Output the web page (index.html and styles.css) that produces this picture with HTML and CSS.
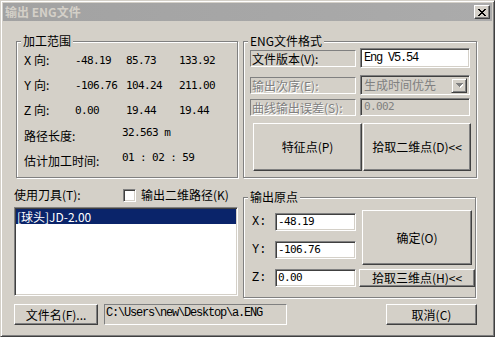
FILE: index.html
```html
<!DOCTYPE html>
<html lang="zh-CN">
<head>
    <meta charset="UTF-8">
    <title>输出 ENG文件</title>
    <link rel="stylesheet" href="styles.css">
</head>
<body>
    <div class="window">
        <div class="titlebar">
            <span class="title">输出 ENG文件</span>
            <span class="close-btn">
                <svg width="8" height="7" viewBox="0 0 8 7" shape-rendering="crispEdges">
                    <rect x="0" y="0" width="2" height="1"/><rect x="6" y="0" width="2" height="1"/>
                    <rect x="1" y="1" width="2" height="1"/><rect x="5" y="1" width="2" height="1"/>
                    <rect x="2" y="2" width="4" height="1"/>
                    <rect x="3" y="3" width="2" height="1"/>
                    <rect x="2" y="4" width="4" height="1"/>
                    <rect x="1" y="5" width="2" height="1"/><rect x="5" y="5" width="2" height="1"/>
                    <rect x="0" y="6" width="2" height="1"/><rect x="6" y="6" width="2" height="1"/>
                </svg>
            </span>
        </div>

        <div class="dialog">
            <div class="main">
                <div class="col-left">
                    <div class="group range">
                        <span class="legend">加工范围</span>
                        <div class="coord-row"><span class="axis"><span class="mono">X</span> 向:</span><span class="num">-48.19</span><span class="num">85.73</span><span class="num">133.92</span></div>
                        <div class="coord-row"><span class="axis"><span class="mono">Y</span> 向:</span><span class="num">-106.76</span><span class="num">104.24</span><span class="num">211.00</span></div>
                        <div class="coord-row"><span class="axis"><span class="mono">Z</span> 向:</span><span class="num">0.00</span><span class="num">19.44</span><span class="num">19.44</span></div>
                        <div class="info-row"><span>路径长度:</span><span class="num raised">32.563 m</span></div>
                        <div class="info-row"><span>估计加工时间:</span><span class="num raised">01 : 02 : 59</span></div>
                    </div>

                    <div class="tool-row">
                        <span class="tool-label">使用刀具(T):</span>
                        <span class="checkbox"></span>
                        <span>输出二维路径(K)</span>
                    </div>

                    <div class="listbox">
                        <div class="list-item selected">[球头]JD-2.00</div>
                    </div>
                </div>

                <div class="col-right">
                    <div class="group format">
                        <span class="legend">ENG文件格式</span>
                        <div class="fmt-row first">
                            <span class="static-box">文件版本(V):</span>
                            <span class="edit mono-text">Eng V5.54</span>
                        </div>
                        <div class="fmt-row second">
                            <span class="static-box disabled">输出次序(E):</span>
                            <span class="edit combo inactive">
                                <span class="combo-text">生成时间优先</span>
                                <span class="drop-btn">
                                    <svg width="7" height="5" viewBox="0 0 7 5" shape-rendering="crispEdges">
                                        <path d="M1 1h7v1h-1v1h-1v1h-1v1h-1v-1h-1v-1h-1v-1h-1z" fill="#fff"/>
                                        <path d="M0 0h7v1h-1v1h-1v1h-1v1h-1v-1h-1v-1h-1v-1h-1z" fill="#808080"/>
                                    </svg>
                                </span>
                            </span>
                        </div>
                        <div class="fmt-row third">
                            <span class="static-box disabled">曲线输出误差(S):</span>
                            <span class="edit inactive"><span class="num gray">0.002</span></span>
                        </div>
                        <div class="btn-row">
                            <button class="btn big first">特征点(P)</button>
                            <button class="btn big">拾取二维点(D)&lt;&lt;</button>
                        </div>
                    </div>

                    <div class="group origin">
                        <span class="legend">输出原点</span>
                        <div class="origin-fields">
                            <div class="origin-row"><span class="axis-label">X:</span><span class="edit small"><span class="num">-48.19</span></span></div>
                            <div class="origin-row"><span class="axis-label">Y:</span><span class="edit small"><span class="num">-106.76</span></span></div>
                            <div class="origin-row"><span class="axis-label">Z:</span><span class="edit small"><span class="num">0.00</span></span></div>
                        </div>
                        <div class="origin-buttons">
                            <button class="btn ok">确定(O)</button>
                            <button class="btn pick3d">拾取三维点(H)&lt;&lt;</button>
                        </div>
                    </div>
                </div>
            </div>

            <div class="footer">
                <button class="btn file-btn">文件名(F)...</button>
                <span class="path-box mono-text">C:\Users\new\Desktop\a.ENG</span>
                <button class="btn cancel">取消(C)</button>
            </div>
        </div>
    </div>
</body>
</html>
```

FILE: styles.css
```css
body {
    margin: 0;
    background-color: #d4d0c8;
    font-family: "Noto Sans CJK SC", "Noto Sans", sans-serif;
    font-size: 12px;
    line-height: 14px;
    color: #000;
}
.window {
    width: 495px;
    height: 337px;
    box-sizing: border-box;
    padding: 2px;
    background-color: #d4d0c8;
    border: 1px solid;
    border-color: #d4d0c8 #404040 #404040 #d4d0c8;
    box-shadow: inset 1px 1px 0 #fff, inset -1px -1px 0 #808080;
}
.titlebar {
    height: 18px;
    display: flex;
    align-items: center;
    justify-content: space-between;
    padding: 0 2px 0 2px;
    background: linear-gradient(to right, #a2a2a2, #ababab);
}
.title {
    color: #d4d0c8;
    font-weight: bold;
    font-size: 12px;
    letter-spacing: 0;
}
.close-btn {
    width: 16px;
    height: 14px;
    box-sizing: border-box;
    display: flex;
    align-items: center;
    justify-content: center;
    background-color: #d4d0c8;
    border: 1px solid;
    border-color: #fff #404040 #404040 #fff;
    box-shadow: inset -1px -1px 0 #808080;
}
.close-btn svg {
    fill: #000;
}
.dialog {
    padding: 14px 15px 0 11px;
}
.main {
    display: grid;
    grid-template-columns: 224px 234px;
    column-gap: 5px;
    align-items: start;
}
.group {
    position: relative;
    box-sizing: border-box;
    margin-top: 6px;
    border: 1px solid #808080;
    box-shadow: inset 1px 1px 0 #fff, 1px 1px 0 #fff;
}
.legend {
    position: absolute;
    top: -8px;
    left: 4px;
    padding: 0 2px;
    background-color: #d4d0c8;
    line-height: 14px;
}
.mono, .num, .mono-text {
    font-family: "Liberation Mono", "DejaVu Sans Mono", monospace;
}
.num {
    font-family: "DejaVu Sans Mono", monospace;
    font-size: 11px;
    letter-spacing: -0.6px;
}
.mono-text {
    font-size: 12px;
    letter-spacing: -1.2px;
}
.mono {
    font-size: 12px;
}

/* 加工范围 */
.range {
    margin-left: 2px;
    width: 222px;
    height: 137px;
    padding: 6px 0 0 7px;
}
.coord-row {
    display: grid;
    grid-template-columns: 51px 51px 53px auto;
    align-items: center;
    height: 25px;
}
.info-row {
    display: grid;
    grid-template-columns: 98px auto;
    align-items: center;
    height: 25px;
}
.raised {
    margin-bottom: 6px;
}
.tool-row {
    display: flex;
    align-items: center;
    margin-top: 10px;
    height: 14px;
}
.tool-label {
    width: 109px;
}
.checkbox {
    width: 13px;
    height: 13px;
    box-sizing: border-box;
    margin-right: 5px;
    background-color: #fff;
    border: 1px solid;
    border-color: #808080 #fff #fff #808080;
    box-shadow: inset 1px 1px 0 #404040, inset -1px -1px 0 #d4d0c8;
}
.listbox {
    margin-top: 5px;
    width: 224px;
    height: 89px;
    box-sizing: border-box;
    padding: 1px;
    background-color: #fff;
    border: 1px solid;
    border-color: #808080 #fff #fff #808080;
    box-shadow: inset 1px 1px 0 #404040, inset -1px -1px 0 #d4d0c8;
}
.list-item {
    height: 15px;
    line-height: 15px;
    padding-left: 1px;
}
.list-item.selected {
    background-color: #0a246a;
    color: #fff;
}

/* ENG文件格式 */
.format {
    width: 234px;
    height: 137px;
    padding: 6px 0 0 6px;
}
.fmt-row {
    display: flex;
    align-items: center;
    height: 20px;
}
.fmt-row.second {
    margin-top: 7px;
}
.fmt-row.third {
    margin-top: 3px;
    height: 18px;
}
.static-box {
    width: 106px;
    height: 17px;
    box-sizing: border-box;
    margin-right: 4px;
    padding-left: 1px;
    line-height: 15px;
    border: 1px solid;
    border-color: #808080 #fff #fff #808080;
    white-space: nowrap;
}
.disabled {
    color: #808080;
    text-shadow: 1px 1px 0 #fff;
}
.edit {
    display: flex;
    align-items: center;
    box-sizing: border-box;
    width: 110px;
    height: 20px;
    padding-left: 3px;
    background-color: #fff;
    border: 1px solid;
    border-color: #808080 #fff #fff #808080;
    box-shadow: inset 1px 1px 0 #404040, inset -1px -1px 0 #d4d0c8;
}
.third .edit {
    height: 18px;
}
.edit.inactive {
    background-color: #d4d0c8;
    color: #808080;
}
.combo {
    justify-content: space-between;
    padding-right: 2px;
}
.combo-text {
    color: #808080;
}
.gray {
    color: #808080;
}
.drop-btn {
    width: 16px;
    height: 15px;
    box-sizing: border-box;
    display: flex;
    align-items: center;
    justify-content: center;
    background-color: #d4d0c8;
    border: 1px solid;
    border-color: #d4d0c8 #404040 #404040 #d4d0c8;
    box-shadow: inset 1px 1px 0 #fff, inset -1px -1px 0 #808080;
}
.btn {
    box-sizing: border-box;
    padding: 0;
    margin: 0;
    font-family: inherit;
    font-size: 12px;
    line-height: 14px;
    color: #000;
    background-color: #d4d0c8;
    border: 1px solid;
    border-color: #fff #404040 #404040 #fff;
    box-shadow: inset -1px -1px 0 #808080;
    white-space: nowrap;
}
.btn-row {
    display: flex;
    margin-top: 7px;
    padding-left: 3px;
}
.btn.big {
    width: 108px;
    height: 48px;
}
.btn.big.first {
    width: 109px;
    margin-right: 1px;
}

/* 输出原点 */
.origin {
    margin-top: 19px;
    width: 233px;
    height: 101px;
    display: flex;
}
.origin-fields {
    padding: 15px 0 0 8px;
    display: flex;
    flex-direction: column;
    gap: 10px;
}
.origin-row {
    display: flex;
    align-items: center;
}
.axis-label {
    width: 23px;
    font-family: "Liberation Mono", monospace;
    font-size: 12px;
}
.edit.small {
    width: 81px;
    height: 18px;
    padding-left: 2px;
}
.origin-buttons {
    display: flex;
    flex-direction: column;
    padding-top: 12px;
    margin-left: 3px;
}
.btn.ok {
    width: 110px;
    height: 55px;
    margin-left: 3px;
}
.btn.pick3d {
    width: 116px;
    height: 18px;
    margin-top: 4px;
}

/* 底部 */
.footer {
    display: flex;
    margin-top: 6px;
}
.btn.file-btn {
    width: 84px;
    height: 21px;
}
.path-box {
    width: 183px;
    height: 21px;
    box-sizing: border-box;
    margin-left: 6px;
    padding: 1px 0 0 1px;
    border: 1px solid;
    border-color: #808080 #fff #fff #808080;
    white-space: nowrap;
    overflow: hidden;
}
.btn.cancel {
    width: 91px;
    height: 21px;
    margin-left: auto;
}
```
